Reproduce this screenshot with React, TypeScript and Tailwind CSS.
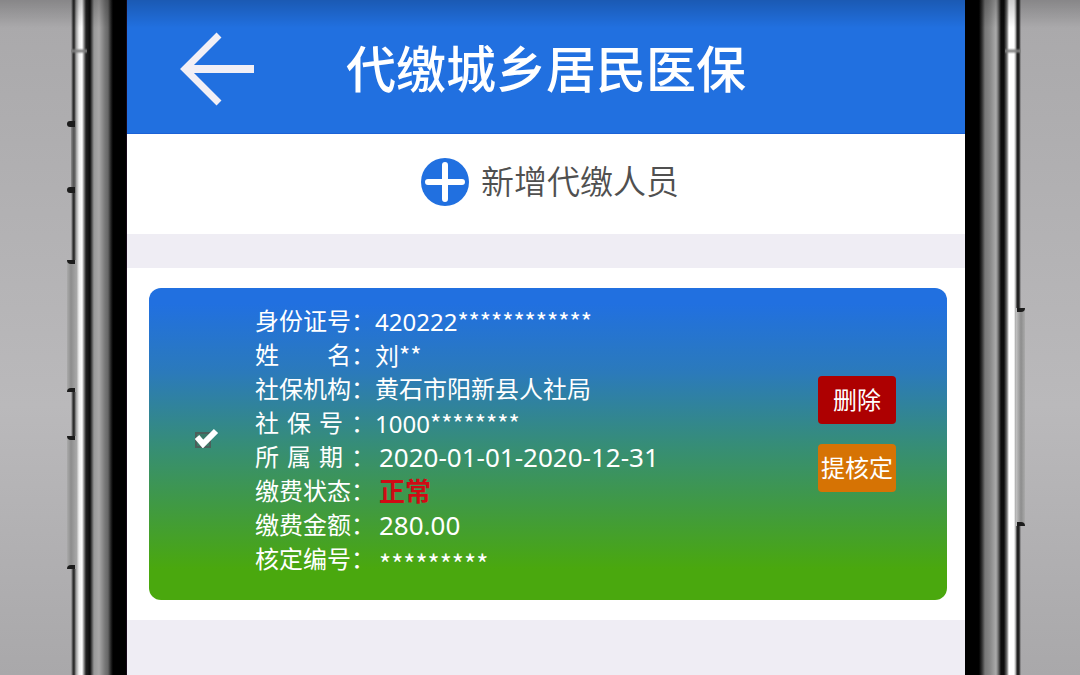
import { useState } from "react";

type Field = {
  label: string;
  spread?: "between" | "gap";
  value: string;
  mask?: string;
  valueClass?: string;
};

const FIELDS: Field[] = [
  { label: "身份证号", value: "420222", mask: "************" },
  { label: "姓名", spread: "between", value: "刘", mask: "**" },
  { label: "社保机构", value: "黄石市阳新县人社局" },
  { label: "社保号", spread: "gap", value: "1000", mask: "********" },
  { label: "所属期", spread: "gap", value: "2020-01-01-2020-12-31", valueClass: "pl-1 text-[26px]" },
  { label: "缴费状态", value: "正常", valueClass: "pl-1 text-[26px] font-bold text-[#d00a14]" },
  { label: "缴费金额", value: "280.00", valueClass: "pl-1 text-[26px]" },
  { label: "核定编号", value: "", mask: "*********", valueClass: "pl-1 pt-1 text-[26px]" },
];

function FieldLabel({ label, spread }: Pick<Field, "label" | "spread">) {
  if (spread === "between") {
    return (
      <dt className="flex w-[120px] shrink-0">
        <span className="flex w-24 justify-between">
          {label.split("").map((char) => (
            <span key={char}>{char}</span>
          ))}
        </span>
        ：
      </dt>
    );
  }

  if (spread === "gap") {
    return (
      <dt className="flex w-[120px] shrink-0 gap-2">
        {`${label}：`.split("").map((char) => (
          <span key={char}>{char}</span>
        ))}
      </dt>
    );
  }

  return <dt className="w-[120px] shrink-0 whitespace-nowrap">{label}：</dt>;
}

function LeftFrame() {
  return (
    <div className="relative w-[60px] shrink-0 bg-[linear-gradient(to_right,transparent_4px,#3a3a3a_6px,#222_7px,#999_9px,#eee_12px,#fff_15px,#888_17px,#222_19px,#0c0c0c_23px,#555_25px,#999_27px,#a8a7a7_32px,#777_38px,#666_41px,#222_44px,#000_46px,#000_59px,#2c1030_60px)]">
      <div className="absolute left-1 top-[48px] h-[6px] w-4 bg-linear-to-b from-transparent via-[#808080] to-transparent" />
      <div className="absolute left-0 top-[121px] h-[6px] w-2 rounded-l-full bg-[#1c1c1c]" />
      <div className="absolute left-1 top-[127px] h-[60px] w-1 bg-[#777]/60" />
      <div className="absolute left-0 top-[187px] h-[6px] w-2 rounded-l-full bg-[#1c1c1c]" />
      <div className="absolute left-0 top-[260px] h-[132px] w-[9px] bg-[linear-gradient(to_right,#aaa,#8d8d8d_4px,#a5a5a5)]">
        <div className="h-1 w-2 rounded-bl-full bg-[#1c1c1c]" />
        <div className="mt-[124px] h-1 w-2 rounded-tl-full bg-[#1c1c1c]" />
      </div>
      <div className="absolute left-0 top-[436px] h-[133px] w-[9px] bg-[linear-gradient(to_right,#aaa,#8d8d8d_4px,#a5a5a5)]">
        <div className="h-1 w-2 rounded-bl-full bg-[#1c1c1c]" />
        <div className="mt-[125px] h-1 w-2 rounded-tl-full bg-[#1c1c1c]" />
      </div>
    </div>
  );
}

function RightFrame() {
  return (
    <div className="relative w-[60px] shrink-0 bg-[linear-gradient(to_right,#000_14px,#333_17px,#777_20px,#888_25px,#aaa_31px,#777_33px,#0c0c0c_36px,#0c0c0c_39px,#777_42px,#fff_44px,#fff_49px,#999_51px,#222_52px,#222_54px,transparent_56px)]">
      <div className="absolute right-1 top-[48px] h-[6px] w-4 bg-linear-to-b from-transparent via-[#808080] to-transparent" />
      <div className="absolute right-0 top-[308px] h-[218px] w-[9px] bg-[linear-gradient(to_right,#c4c4c4,#8d8d8d_5px,#aaa)]">
        <div className="ml-px h-1 w-2 rounded-br-full bg-[#1c1c1c]" />
        <div className="mt-[210px] ml-px h-1 w-2 rounded-tr-full bg-[#1c1c1c]" />
      </div>
    </div>
  );
}

export default function App() {
  const [selected, setSelected] = useState(true);

  return (
    <div className="relative flex min-h-screen bg-[linear-gradient(to_bottom,#a9a8aa,#b3b2b4_35%,#bab9bb_60%,#a9a8aa)] pl-[67px] pr-[55px] font-['Noto_Sans','Noto_Sans_CJK_SC',sans-serif]">
      <LeftFrame />

      <div className="flex min-w-0 flex-1 flex-col bg-[#efedf4]">
        <header className="grid h-[134px] grid-cols-[1fr_auto_1fr] items-center border-b border-[#1b62d6] bg-[#2170e0] px-[53px] pt-1 text-white">
          <button type="button" aria-label="返回" className="justify-self-start">
            <svg
              viewBox="0 0 74 74"
              className="size-[74px]"
              fill="none"
              stroke="#f1eff6"
              strokeWidth="7"
            >
              <path d="M39 3 5 37l34 34" />
              <path d="M6 37h68" strokeWidth="8" />
            </svg>
          </button>
          <h1 className="whitespace-nowrap text-[50px] leading-none font-medium">代缴城乡居民医保</h1>
        </header>

        <div className="flex h-[100px] items-center justify-center bg-white pb-1 pl-2">
          <button type="button" className="flex items-center gap-3 text-[33px] font-[350] text-[#505050]">
            <svg viewBox="0 0 48 48" className="size-12" fill="none">
              <circle cx="24" cy="24" r="24" fill="#2170e0" />
              <path d="M24 7v34M7 24h34" stroke="#fff" strokeWidth="6" strokeLinecap="round" />
            </svg>
            新增代缴人员
          </button>
        </div>

        <main className="mt-[34px] bg-white pt-5 pr-[18px] pb-5 pl-[22px]">
          <article className="flex items-center rounded-xl bg-[linear-gradient(to_bottom,#2170e0_5%,#2b7abb_27%,#368d78_50%,#419b3d_72%,#4aa80e_90%)] pt-4 pr-[51px] pb-6 pl-[46px] text-white">
            <label className="relative block size-4">
              <input
                type="checkbox"
                aria-label="选择"
                checked={selected}
                onChange={(e) => setSelected(e.target.checked)}
                className="peer block size-4 appearance-none border-2 border-[#4c5f5b] bg-[#3b7a68]"
              />
              <svg
                viewBox="0 0 24 20"
                className="pointer-events-none absolute bottom-0 left-0 hidden h-5 w-6 peer-checked:block"
                fill="none"
                stroke="#fff"
                strokeWidth="6"
              >
                <path d="m2 9 6 7L21 3" />
              </svg>
            </label>

            <dl className="ml-11 flex-1 text-2xl">
              {FIELDS.map((field) => (
                <div key={field.label} className="flex h-[34px] leading-[34px]">
                  <FieldLabel label={field.label} spread={field.spread} />
                  <dd className={`whitespace-nowrap leading-[34px] ${field.valueClass ?? ""}`}>
                    {field.value}
                    {field.mask && (
                      <span className="font-['Noto_Sans_CJK_SC',sans-serif]">{field.mask}</span>
                    )}
                  </dd>
                </div>
              ))}
            </dl>

            <div className="flex flex-col gap-5 pb-3">
              <button type="button" className="h-12 w-[78px] rounded bg-[#ad0001] text-2xl">
                删除
              </button>
              <button type="button" className="h-12 w-[78px] whitespace-nowrap rounded bg-[#d67304] text-2xl">
                提核定
              </button>
            </div>
          </article>
        </main>
      </div>

      <RightFrame />

      <div className="pointer-events-none absolute inset-x-0 top-0 h-7 bg-linear-to-b from-black/20 to-transparent" />
    </div>
  );
}
